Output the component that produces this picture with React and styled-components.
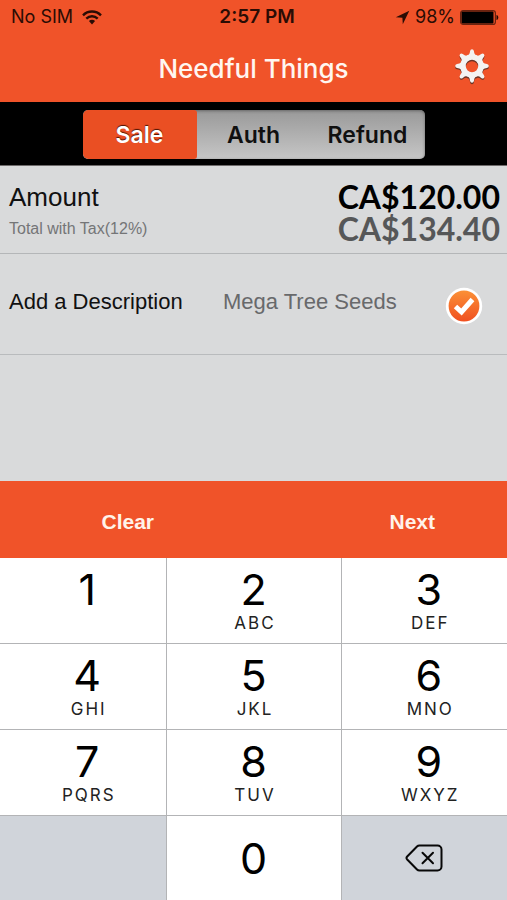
import React from "react";
import styled, { createGlobalStyle } from "styled-components";

const ORANGE = "#f05329";
const SANS = '"Liberation Sans", Arial, sans-serif';
const UI = 'Inter, "Liberation Sans", sans-serif';

const GlobalStyle = createGlobalStyle`
  *, *::before, *::after { box-sizing: border-box; }
  body { margin: 0; background: #d9dadb; }
  button, input { font: inherit; color: inherit; border: 0; padding: 0; background: none; }
  button { cursor: pointer; }
`;

const Screen = styled.div`
  display: flex;
  flex-direction: column;
  min-height: 100vh;
  background: #d9dadb;
  color: #111;
  font-family: ${SANS};
`;

const Header = styled.header`
  background: ${ORANGE};
  padding-bottom: 6px;
`;

const StatusBar = styled.div`
  display: grid;
  grid-template-columns: 1fr auto 1fr;
  align-items: center;
  height: 34px;
  padding: 0 8px 0 11px;
  color: #2a0c04;
  font: 400 18px/22px ${UI};
`;

const StatusGroup = styled.div`
  display: flex;
  align-items: center;
  justify-content: ${(p) => (p.$end ? "flex-end" : "flex-start")};
  gap: ${(p) => (p.$end ? "5px" : "9px")};
`;

const Clock = styled.time`
  font-size: 19px;
  font-weight: 600;
  padding-left: 4px;
`;

const TitleBar = styled.div`
  display: grid;
  grid-template-columns: 40px 1fr 40px;
  align-items: center;
  height: 62px;
  padding: 4px 15px 0;
`;

const Title = styled.h1`
  grid-column: 2;
  margin: 0;
  text-align: center;
  color: #fff6f0;
  font: 500 26px/32px ${UI};
  padding-top: 4px;
`;

const IconButton = styled.button`
  display: grid;
  place-items: center;
  height: 40px;
`;

const SegmentBar = styled.div`
  display: flex;
  justify-content: center;
  padding: 8px 0 6px;
  background: #000;
  border-bottom: 1px solid #6d6a6a;
`;

const Segments = styled.fieldset`
  display: grid;
  grid-template-columns: repeat(3, 1fr);
  width: 342px;
  height: 49px;
  margin: 0;
  padding: 0;
  border: 0;
  border-radius: 5px;
  overflow: hidden;
  background: linear-gradient(#999, #a2a2a2 20%, #c6c6c6);
  box-shadow: inset 0 1px 3px #666;
`;

const SegmentRadio = styled.input`
  position: absolute;
  opacity: 0;
`;

const Segment = styled.label`
  display: grid;
  place-items: center;
  color: #101010;
  font: 600 23px/28px ${UI};
  cursor: pointer;

  &:has(input:checked) {
    background: #ea4f23;
    border-radius: 5px 3px 3px 5px;
    color: #fff;
    text-shadow: 0 -1px 1px #4a1405;
  }
`;

const AmountRow = styled.section`
  display: flex;
  justify-content: space-between;
  height: 88px;
  padding: 15px 7px 0 9px;
  border-bottom: 1px solid #b4b6b8;
`;

const Labels = styled.div`
  display: flex;
  flex-direction: column;
`;

const AmountLabel = styled.span`
  font-size: 26px;
  line-height: 32px;
`;

const TaxLabel = styled.span`
  color: #747577;
  font-size: 16px;
  line-height: 32px;
`;

const Totals = styled.div`
  display: flex;
  flex-direction: column;
  align-items: flex-end;
`;

const Money = styled.span`
  color: ${(p) => (p.$muted ? "#565758" : "#000")};
  font: 700 32px/32px Lato, sans-serif;
`;

const DescriptionRow = styled.section`
  display: flex;
  align-items: center;
  height: 101px;
  padding: 0 24px 0 9px;
  border-bottom: 1px solid #b9bbbd;
  font-size: 22px;
  line-height: 28px;
`;

const DescriptionLabel = styled.label`
  flex: none;
  width: 214px;
  padding-bottom: 4px;
`;

const DescriptionInput = styled.input`
  flex: 1;
  min-width: 0;
  padding-bottom: 4px;
  color: #68696b;
  outline: none;
`;

const Tick = styled.label`
  display: grid;
  padding-top: 4px;
  cursor: pointer;

  input { position: absolute; opacity: 0; }
  input:not(:checked) + svg .mark { display: none; }
`;

const Spacer = styled.div`
  flex: 1;
`;

const ActionBar = styled.div`
  display: grid;
  grid-template-columns: 1fr 1fr;
  height: 77px;
  background: ${ORANGE};
`;

const Action = styled.button`
  color: #fff3ea;
  font: 700 21px/28px ${SANS};
  padding: ${(p) => (p.$end ? "4px 0 0 64px" : "4px 0 0 2px")};
`;

const Keypad = styled.div`
  display: grid;
  grid-template-columns: 1fr 174px 1fr;
  grid-template-rows: repeat(3, 85px) 84px;
  gap: 1px;
  background: #b3b4b6;
`;

const Key = styled.button`
  display: flex;
  flex-direction: column;
  align-items: center;
  justify-content: ${(p) => (p.$center ? "center" : "flex-start")};
  padding-top: ${(p) => (p.$center ? "0" : "9px")};
  padding-left: ${(p) => (p.$edge ? "9px" : "0")};
  background: ${(p) => (p.$grey ? "#d0d4da" : "#fff")};
  color: #000;
  font-family: ${UI};
`;

const BlankKey = styled.div`
  background: #d0d4da;
`;

const Digit = styled.span`
  font-size: 43px;
  line-height: 45px;
`;

const Letters = styled.span`
  padding-left: 3px;
  color: #222;
  font-size: 17px;
  line-height: 22px;
  letter-spacing: 2px;
`;

const WifiIcon = () => (
  <svg width="20" height="15" viewBox="0 0 20 15" fill="none" stroke="currentColor" strokeWidth="2.4" aria-label="Wi-Fi">
    <path d="M1 5.3C6 .2 14 .2 19 5.3" />
    <path d="M4.3 8.6C7.6 5.4 12.4 5.4 15.700 8.600" />
    <path d="M10 14.4 6.9 11.1c1.8-1.7 4.4-1.7 6.2 0z" fill="currentColor" stroke="none" />
  </svg>
);

const LocationIcon = () => (
  <svg width="15" height="15" viewBox="0 0 15 15" aria-label="Location">
    <path d="M14.3.7.8 7.3l6.600.4.4 6.600z" fill="currentColor" />
  </svg>
);

const BatteryIcon = () => (
  <svg width="39" height="15" viewBox="0 0 39 15" aria-label="Battery">
    <rect x=".6" y=".6" width="34.8" height="13.8" rx="2.5" fill="none" stroke="#6b220f" strokeWidth="1.2" />
    <rect x="1.5" y="1.5" width="32" height="12" rx="1" fill="#000" />
    <path d="M36.5 5c2.4.4 2.4 4.6 0 5z" fill="#200803" />
  </svg>
);

const TEETH = [0, 45, 90, 135, 180, 225, 270, 315];

const GearShape = ({ color }) => (
  <g>
    <circle r="9" fill="none" stroke={color} strokeWidth="5.6" />
    {TEETH.map((a) => (
      <path key={a} transform={`rotate(${a})`} d="M-3.4-10.800Q-2-12.500-1.900-15Q-1.600-16.800 0-16.800T1.900-15Q2-12.500 3.400-10.800z" fill={color} />
    ))}
  </g>
);

const GearIcon = () => (
  <svg width="36" height="38" viewBox="-18 -18 36 38" aria-hidden="true">
    <g transform="translate(0 1.4)"><GearShape color="#6b3426" /></g>
    <GearShape color="#f4f3f2" />
  </svg>
);

const TickIcon = () => (
  <svg width="38" height="38" viewBox="0 0 38 38" aria-hidden="true">
    <defs>
      <linearGradient id="tickFill" x1="0" y1="0" x2="0" y2="1">
        <stop offset="0" stopColor="#fb9036" />
        <stop offset="1" stopColor="#f05020" />
      </linearGradient>
    </defs>
    <circle cx="19" cy="19" r="18.2" fill="#fff" />
    <circle cx="19" cy="19" r="15.4" fill="url(#tickFill)" />
    <path className="mark" d="m10.500 19.500 6 5.500L27.500 12.500" fill="none" stroke="#fff" strokeWidth="5" />
  </svg>
);

const DeleteIcon = () => (
  <svg width="38" height="28" viewBox="0 0 38 28" fill="none" stroke="#080808" strokeWidth="2" strokeLinejoin="round" aria-hidden="true">
    <path d="M14.500 1.500H32.500a4 4 0 0 1 4 4v17a4 4 0 0 1-4 4H14.500Q13 26.500 12 25.500L2.200 15.500Q.8 14 2.200 12.500L12 2.500Q13 1.500 14.500 1.500" />
    <path d="m17.500 8.800 10.500 10.500M28 8.800 17.500 19.300" strokeLinecap="round" />
  </svg>
);

const KEYS = [
  ["1", ""], ["2", "ABC"], ["3", "DEF"],
  ["4", "GHI"], ["5", "JKL"], ["6", "MNO"],
  ["7", "PQRS"], ["8", "TUV"], ["9", "WXYZ"],
];

export default function App() {
  return (
    <>
      <GlobalStyle />
      <Screen>
        <Header>
          <StatusBar>
            <StatusGroup>
              <span>No SIM</span>
              <WifiIcon />
            </StatusGroup>
            <Clock>2:57 PM</Clock>
            <StatusGroup $end>
              <LocationIcon />
              <span>98%</span>
              <BatteryIcon />
            </StatusGroup>
          </StatusBar>
          <TitleBar>
            <Title>Needful Things</Title>
            <IconButton type="button" aria-label="Settings"><GearIcon /></IconButton>
          </TitleBar>
        </Header>
        <SegmentBar>
          <Segments aria-label="Transaction type">
            {["Sale", "Auth", "Refund"].map((name) => (
              <Segment key={name}>
                <SegmentRadio type="radio" name="type" defaultChecked={name === "Sale"} />
                {name}
              </Segment>
            ))}
          </Segments>
        </SegmentBar>
        <AmountRow>
          <Labels>
            <AmountLabel>Amount</AmountLabel>
            <TaxLabel>Total with Tax(12%)</TaxLabel>
          </Labels>
          <Totals>
            <Money>CA$120.00</Money>
            <Money $muted>CA$134.40</Money>
          </Totals>
        </AmountRow>
        <DescriptionRow>
          <DescriptionLabel htmlFor="description">Add a Description</DescriptionLabel>
          <DescriptionInput id="description" type="text" defaultValue="Mega Tree Seeds" />
          <Tick>
            <input type="checkbox" defaultChecked aria-label="Include description" />
            <TickIcon />
          </Tick>
        </DescriptionRow>
        <Spacer />
        <ActionBar>
          <Action type="button">Clear</Action>
          <Action type="button" $end>Next</Action>
        </ActionBar>
        <Keypad>
          {KEYS.map(([digit, letters], i) => (
            <Key key={digit} type="button" $edge={i % 3 !== 1}>
              <Digit>{digit}</Digit>
              {letters && <Letters>{letters}</Letters>}
            </Key>
          ))}
          <BlankKey />
          <Key type="button" $center><Digit>0</Digit></Key>
          <Key type="button" $center $grey aria-label="Delete"><DeleteIcon /></Key>
        </Keypad>
      </Screen>
    </>
  );
}
